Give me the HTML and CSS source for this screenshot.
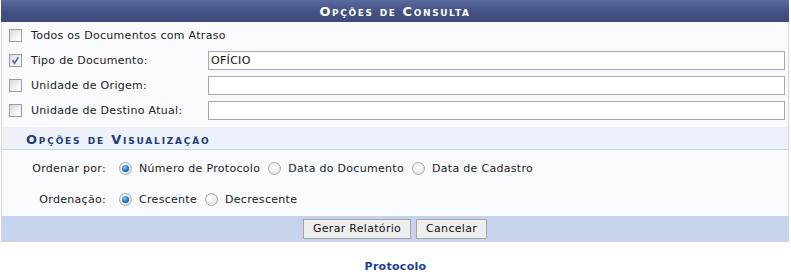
FILE: index.html
```html
<!DOCTYPE html>
<html lang="pt">
<head>
<meta charset="utf-8">
<title>Opções de Consulta</title>
<link rel="stylesheet" href="styles.css">
</head>
<body>
<div class="panel">
  <div class="caption">Opções de Consulta</div>
  <div class="filters">
    <div class="row">
      <span class="cb"></span>
      <span class="lbl-full">Todos os Documentos com Atraso</span>
    </div>
    <div class="row">
      <span class="cb checked"><svg viewBox="0 0 13 13" width="13" height="13"><path d="M3.6 6.3 L5.5 9.2 L9.5 3.3" fill="none" stroke="#4a64b0" stroke-width="1.6"/></svg></span>
      <span class="lbl">Tipo de Documento:</span>
      <span class="input">OFÍCIO</span>
    </div>
    <div class="row">
      <span class="cb"></span>
      <span class="lbl">Unidade de Origem:</span>
      <span class="input"></span>
    </div>
    <div class="row">
      <span class="cb"></span>
      <span class="lbl">Unidade de Destino Atual:</span>
      <span class="input"></span>
    </div>
  </div>
  <div class="subcaption">Opções de Visualização</div>
  <div class="options">
    <div class="orow">
      <span class="olabel">Ordenar por:</span>
      <span class="radio on"></span><span class="rtext">Número de Protocolo</span>
      <span class="radio"></span><span class="rtext">Data do Documento</span>
      <span class="radio"></span><span class="rtext">Data de Cadastro</span>
    </div>
    <div class="orow">
      <span class="olabel">Ordenação:</span>
      <span class="radio on"></span><span class="rtext">Crescente</span>
      <span class="radio"></span><span class="rtext">Decrescente</span>
    </div>
  </div>
  <div class="foot">
    <span class="btn">Gerar Relatório</span>
    <span class="btn">Cancelar</span>
  </div>
</div>
<div class="crumb">Protocolo</div>
</body>
</html>
```
FILE: styles.css
```css
html, body { margin: 0; padding: 0; background: #fff; }
body {
  font-family: "DejaVu Sans", Verdana, sans-serif;
  font-size: 11px;
  letter-spacing: 0.3px;
  color: #222;
}
.panel {
  width: 786px;
  margin-left: 1px;
  border-left: 1px solid #d6d6d6;
  border-right: 1px solid #d6d6d6;
  background: #f9fafd;
}
.caption {
  height: 22px;
  line-height: 23px;
  text-align: center;
  font-variant: small-caps;
  font-weight: bold;
  font-size: 13px;
  letter-spacing: 1.6px;
  color: #fff;
  background: linear-gradient(#5b6b9e, #425082 55%, #3c4a7c);
  margin-left: -1px;
  margin-right: -1px;
}
.filters { padding: 1px 3px 4px 7px; }
.row {
  height: 25px;
  display: flex;
  align-items: center;
}
.cb {
  width: 11px; height: 11px;
  border: 1px solid #9c9c9c;
  background: linear-gradient(135deg, #d8d8d8, #f4f4f4 60%, #fff);
  flex: none;
  position: relative;
  margin-right: 9px;
}
.cb svg { position: absolute; left: -1px; top: -1px; }
.lbl { width: 177px; flex: none; }
.input {
  flex: 1;
  height: 17px;
  line-height: 17px;
  border: 1px solid #a7a7a7;
  background: #fff;
  padding-left: 2px;
  color: #111;
}
.subcaption {
  height: 22px;
  line-height: 25px;
  background: #edf1f8;
  border-bottom: 1px solid #c9d3e6;
  padding-left: 24px;
  font-variant: small-caps;
  font-weight: bold;
  letter-spacing: 1.8px;
  font-size: 13px;
  color: #253a78;
}
.options { padding: 3px 0 1px 0; }
.orow {
  height: 31px;
  display: flex;
  align-items: center;
}
.olabel {
  width: 104px;
  text-align: right;
  flex: none;
}
.radio {
  width: 11px; height: 11px;
  border-radius: 50%;
  border: 1px solid #a9a9a9;
  background: radial-gradient(circle at 40% 40%, #fff, #dcdcdc);
  margin: 0 7px 0 8px;
  flex: none;
  position: relative;
}
.orow .olabel + .radio { margin-left: 13px; }
.radio.on::after {
  content: "";
  position: absolute;
  left: 2px; top: 2px;
  width: 7px; height: 7px;
  border-radius: 50%;
  background: radial-gradient(circle at 40% 35%, #8fd3ff, #1c6fb8 55%, #0c3f78);
}
.foot {
  height: 26px;
  background: #c6d3ec;
  display: flex;
  justify-content: center;
  align-items: center;
  gap: 5px;
  margin-left: -1px;
  margin-right: -1px;
  border-left: 1px solid #d6d6d6;
  border-right: 1px solid #d6d6d6;
}
.btn {
  height: 18px;
  line-height: 18px;
  border: 1px solid #a5a5a5;
  background: #eeeeee;
  padding: 0 9px;
  color: #111;
}
.crumb {
  text-align: center;
  font-weight: bold;
  color: #1d3e9a;
  margin-top: 18px;
}
```
